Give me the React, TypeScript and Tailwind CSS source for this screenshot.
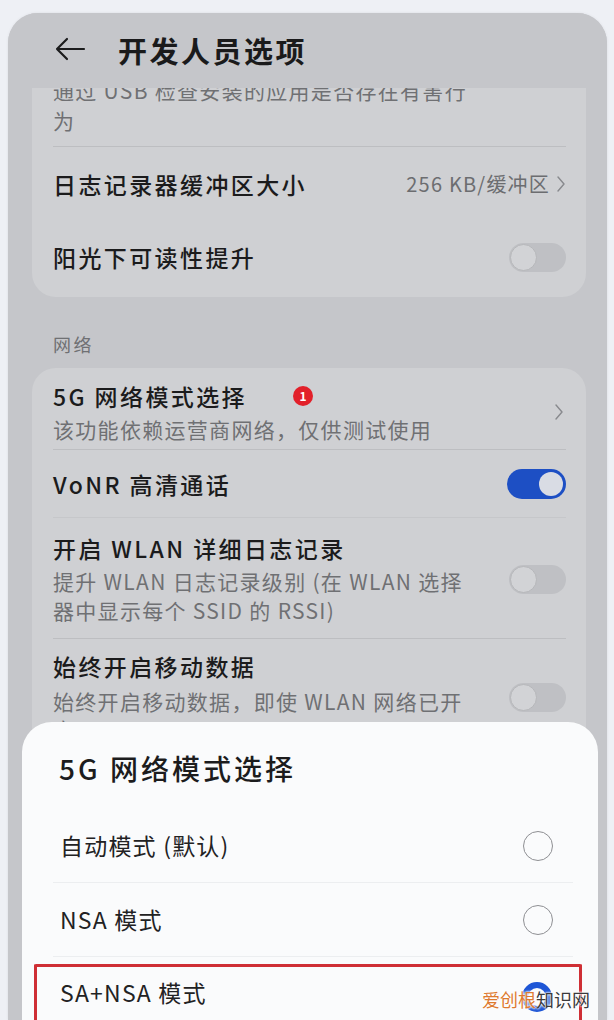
import React from "react";

const font = { fontFamily: '"Noto Sans CJK SC", "Noto Sans", sans-serif' };

function Toggle({ on = false }: { on?: boolean }) {
  if (on) {
    return (
      <div className="w-[59px] h-[30px] rounded-full bg-[#1d4fc4] flex items-center justify-end pr-[3px] shrink-0">
        <div className="w-[24px] h-[24px] rounded-full bg-[#d9dce4]" />
      </div>
    );
  }
  return (
    <div className="w-[57px] h-[29px] rounded-full bg-[#bfc0c4] flex items-center pl-[1px] shrink-0">
      <div className="w-[27px] h-[27px] rounded-full bg-[#d2d3d6] border border-[#b6b7ba]" />
    </div>
  );
}

function Chevron() {
  return (
    <svg width="10" height="18" viewBox="0 0 10 18" className="shrink-0">
      <path d="M2 2 L8 9 L2 16" fill="none" stroke="#88898d" strokeWidth="1.4" strokeLinecap="round" strokeLinejoin="round" />
    </svg>
  );
}

function Radio() {
  return <div className="w-[30px] h-[30px] rounded-full border-[1.5px] border-[#8e8f93] shrink-0" />;
}

const title = "text-[23px] leading-[28px] font-medium text-[#1b1b1c] tracking-[2.4px] whitespace-nowrap";
const sub = "text-[21px] text-[#6f7073] tracking-[1.3px]";

export default function App() {
  return (
    <div style={font} className="w-[614px] h-[1020px] bg-[#eef0f5] pt-[13px] pl-[8px] pr-[7px] overflow-hidden">
      <div className="relative h-[1007px] rounded-t-[30px] bg-[#c5c6ca] flex flex-col overflow-hidden shadow-[0_0_3px_rgba(0,0,0,0.08)]">
        {/* header */}
        <div className="h-[75px] shrink-0 flex items-start pt-[23px] pl-[46px] relative z-10 bg-[#c5c6ca]">
          <svg width="32" height="26" viewBox="0 0 32 26">
            <path d="M30 13 H3 M13 3 L3 13 L13 23" fill="none" stroke="#1c1c1d" strokeWidth="2.2" strokeLinecap="round" strokeLinejoin="round" />
          </svg>
          <div className="ml-[32px] text-[29px] leading-[28px] font-bold text-[#1a1a1b] tracking-[2.5px]">开发人员选项</div>
        </div>

        {/* content */}
        <div className="flex-1 overflow-hidden pl-[24px] pr-[21px]">
          {/* card 1 */}
          <div className="mt-[-26px] rounded-[24px] bg-[#cfd0d3] pl-[21px] pr-[20px]">
            <div className="pt-[13px] pb-[11px] border-b border-[#bdbec1]">
              <div className={`${sub} leading-[30px] whitespace-nowrap`}>通过 USB 检查安装的应用是否存在有害行</div>
              <div className={`${sub} leading-[30px]`}>为</div>
            </div>
            <div className="h-[74px] flex items-center justify-between">
              <div className={title}>日志记录器缓冲区大小</div>
              <div className="flex items-center gap-[6px]">
                <span className="text-[20px] text-[#6c6d70] tracking-[1.2px] whitespace-nowrap">256 KB/缓冲区</span>
                <Chevron />
              </div>
            </div>
            <div className="h-[72px] flex items-center justify-between">
              <div className={title}>阳光下可读性提升</div>
              <Toggle />
            </div>
            <div className="h-[4px]" />
          </div>

          {/* section label */}
          <div className="mt-[32px] pl-[21px] text-[18px] leading-[30px] text-[#6f7073] tracking-[2.5px]">网络</div>

          {/* card 2 */}
          <div className="mt-[9px] rounded-[24px] bg-[#cfd0d3] pl-[21px] pr-[20px]">
            <div className="h-[82px] pt-[14px] flex items-center justify-between border-b border-[#bdbec1]">
              <div className="self-start">
                <div className="flex items-center">
                  <span className={title}>5G 网络模式选择</span>
                  <span className="ml-[46px] w-[20px] h-[20px] rounded-full bg-[#e2202a] text-white text-[12px] font-bold flex items-center justify-center leading-none">1</span>
                </div>
                <div className={`mt-[6px] leading-[26px] whitespace-nowrap ${sub}`}>该功能依赖运营商网络，仅供测试使用</div>
              </div>
              <div className="mr-[2px] mb-[8px]">
                <Chevron />
              </div>
            </div>
            <div className="h-[68px] flex items-center justify-between border-b border-[#c6c7ca]">
              <div className={title}>VoNR 高清通话</div>
              <Toggle on />
            </div>
            <div className="pt-[16px] pb-[13px] flex items-center justify-between border-b border-[#bdbec1]">
              <div>
                <div className={title}>开启 WLAN 详细日志记录</div>
                <div className={`mt-[5px] leading-[29px] w-[418px] ${sub}`}>提升 WLAN 日志记录级别 (在 WLAN 选择器中显示每个 SSID 的 RSSI)</div>
              </div>
              <Toggle />
            </div>
            <div className="pt-[13px] pb-[13px] flex items-center justify-between">
              <div>
                <div className={title}>始终开启移动数据</div>
                <div className={`mt-[7px] leading-[28px] w-[418px] ${sub}`}>始终开启移动数据，即使 WLAN 网络已开启</div>
              </div>
              <Toggle />
            </div>
          </div>
        </div>

        {/* bottom sheet */}
        <div className="absolute left-[14px] w-[576px] top-[709px] h-[320px] rounded-t-[30px] bg-[#fafbfc]">
          <div className="pl-[37px] pt-[30px] text-[28px] leading-[32px] font-medium text-[#1c1c1d] tracking-[3px]">5G 网络模式选择</div>
          <div className="mt-[25px] pl-[31px] pr-[25px]">
            <div className="h-[74px] flex items-center justify-between border-b border-[#eceef0] pl-[7px] pr-[20px]">
              <span className="text-[23px] text-[#222223] tracking-[1.2px]">自动模式 (默认)</span>
              <Radio />
            </div>
            <div className="h-[74px] flex items-center justify-between border-b border-[#eceef0] pl-[7px] pr-[20px]">
              <span className="text-[23px] text-[#222223] tracking-[1.2px]">NSA 模式</span>
              <Radio />
            </div>
          </div>
          <div className="ml-[12px] mt-[7px] w-[548px] h-[80px] border-[3px] border-[#cf2f35] border-b-0 rounded-[2px] flex items-start justify-between pt-[10px] pl-[23px] pr-[27px]">
            <span className="text-[23px] leading-[30px] text-[#222223] tracking-[1.2px]">SA+NSA 模式</span>
            <div className="w-[30px] h-[30px] rounded-full border-[6px] border-[#1e56d6] shrink-0 mt-[5px]" />
          </div>
        </div>

        {/* watermark */}
        <div
          className="absolute left-[474px] top-[974px] text-[18px] leading-[24px] whitespace-nowrap"
          style={{ textShadow: "0 0 2px #fff, 0 0 2px #fff, 0 0 3px #fff" }}
        >
          <span className="text-[#dd7a30]">爱创根</span>
          <span className="text-[#3a3a3c]">知识网</span>
        </div>
      </div>
    </div>
  );
}
